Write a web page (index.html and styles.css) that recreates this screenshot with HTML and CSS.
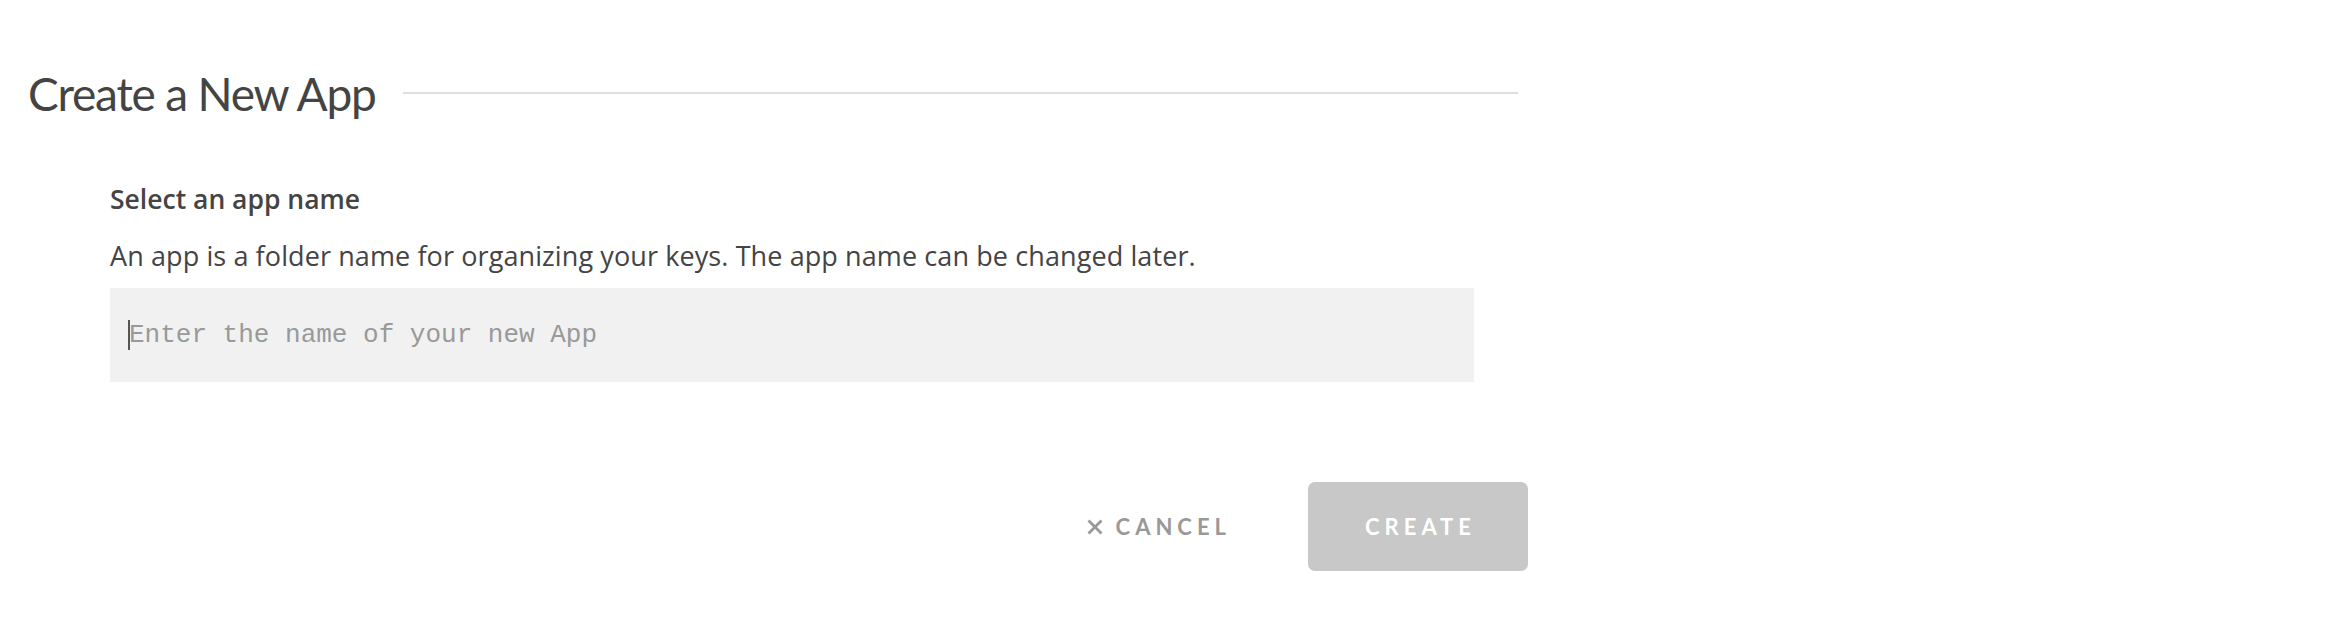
FILE: index.html
```html
<!DOCTYPE html>
<html lang="en">
<head>
<meta charset="utf-8">
<title>Create a New App</title>
<link rel="stylesheet" href="styles.css">
</head>
<body>
<div class="page">
  <div class="header">
    <h1 class="title">Create a New App</h1>
    <div class="rule"></div>
  </div>
  <form class="form">
    <h2 class="label">Select an app name</h2>
    <p class="desc">An app is a folder name for organizing your keys. The app name can be changed later.</p>
    <div class="field">
      <input class="input" type="text" placeholder="Enter the name of your new App">
    </div>
    <div class="actions">
      <button type="button" class="cancel">
        <svg class="x" width="16" height="16" viewBox="0 0 16 16"><path d="M1.5 1.5L14.5 14.5M14.5 1.5L1.5 14.5" stroke="#999" stroke-width="2.8" fill="none"/></svg>
        <span>CANCEL</span>
      </button>
      <button type="button" class="create" disabled>CREATE</button>
    </div>
  </form>
</div>
</body>
</html>
```

FILE: styles.css
```css
* { box-sizing: border-box; }
html, body { margin: 0; padding: 0; background: #fff; }
body {
  font-family: "Open Sans", "Noto Sans", sans-serif;
  color: #444;
}
.page {
  width: 1540px;
  padding: 66px 0 0 28px;
}
.header {
  display: flex;
  align-items: center;
  gap: 27px;
  width: 1490px;
}
.title {
  margin: 0;
  font-family: "Lato", "Open Sans", sans-serif;
  font-size: 46px;
  line-height: 56px;
  font-weight: 400;
  letter-spacing: -1.2px;
  color: #444;
  white-space: nowrap;
}
.rule {
  flex: 1;
  height: 2px;
  background: #dedede;
  margin-bottom: 3px;
}
.form {
  margin: 61px 0 0 82px;
  width: 1418px;
}
.label {
  margin: 0;
  font-size: 26.5px;
  line-height: 32px;
  font-weight: 600;
  color: #444;
}
.desc {
  margin: 24px 0 0;
  font-size: 27px;
  line-height: 34px;
  letter-spacing: 0.1px;
  color: #444;
}
.field {
  position: relative;
  width: 1364px;
  margin-top: 15px;
}
.field::before {
  content: "";
  position: absolute;
  left: 18px;
  top: 32px;
  width: 2px;
  height: 30px;
  background: #555;
}
.input {
  display: block;
  width: 100%;
  height: 94px;
  border: 0;
  outline: none;
  background: #f1f1f1;
  padding: 0 0 0 19px;
  font-family: "Liberation Mono", "DejaVu Sans Mono", monospace;
  font-size: 26px;
  color: #444;
}
.input::placeholder { color: #999; }
.actions {
  display: flex;
  justify-content: flex-end;
  align-items: center;
  gap: 77px;
  margin-top: 100px;
}
.cancel {
  display: flex;
  align-items: center;
  gap: 13px;
  border: 0;
  background: none;
  padding: 0;
  font-family: "Lato", sans-serif;
  font-size: 22px;
  font-weight: 700;
  letter-spacing: 5px;
  color: #999;
}
.create {
  width: 220px;
  height: 89px;
  border: 0;
  border-radius: 7px;
  background: #c8c8c8;
  color: #fff;
  font-family: "Lato", sans-serif;
  font-size: 22px;
  font-weight: 700;
  letter-spacing: 5px;
  padding: 0 0 0 5px;
}
```
